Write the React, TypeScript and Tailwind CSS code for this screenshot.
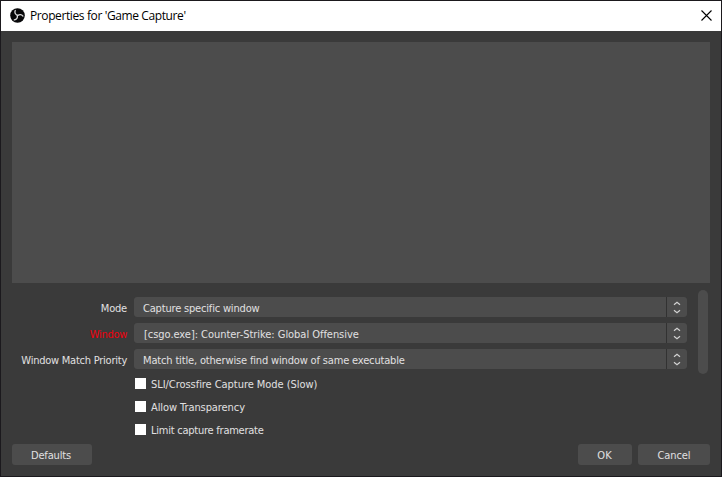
import React from 'react';

function ObsLogo() {
  return (
    <svg className="ml-[9px] h-[15px] w-[15px] shrink-0 -translate-y-px" viewBox="0 0 30 30" fill="none">
      <circle cx="15" cy="15" r="14.6" fill="#08080a" />
      <g stroke="#dededf" strokeWidth="2.6" strokeLinecap="round">
        <path d="M15 14.5C11 13.5 8.5 9.5 10.5 5" />
        <path d="M15 14.5C11 13.5 8.5 9.5 10.5 5" transform="rotate(120 15 15)" />
        <path d="M15 14.5C11 13.5 8.5 9.5 10.5 5" transform="rotate(240 15 15)" />
      </g>
    </svg>
  );
}

function SelectRow({ label, value, labelClass, valueClass }: { label: string; value: string; labelClass: string; valueClass: string }) {
  return (
    <div className="flex h-5 items-center">
      <div className={`w-[126px] shrink-0 pt-[3px] text-right whitespace-nowrap ${labelClass}`}>{label}</div>
      <div className="ml-[7px] flex h-5 w-[553px] gap-px overflow-hidden rounded-[3px] bg-[#323232]">
        <div className={`flex w-[532px] items-center bg-[#4c4c4c] pt-[3px] whitespace-nowrap ${valueClass}`}>
          <span>{value}</span>
        </div>
        <div className="flex w-5 items-center justify-center bg-[#4c4c4c]">
          <svg width="8" height="14" viewBox="0 0 8 14" fill="none" stroke="#d2d2d2" strokeWidth="1.2">
            <path d="M1 4.7L4 2.2L7 4.7M1 10.3L4 12.8L7 10.3" />
          </svg>
        </div>
      </div>
    </div>
  );
}

function Check({ label, className }: { label: string; className: string }) {
  return (
    <label className="flex h-[11px] items-center">
      <span className="h-[11px] w-[11px] bg-white" />
      <span className={`ml-[5px] pt-[3px] whitespace-nowrap ${className}`}>{label}</span>
    </label>
  );
}

export default function App() {
  return (
    <div className="flex h-[477px] w-[722px] flex-col border border-[#1b191d] bg-[#3a3a3a] font-['DejaVu_Sans_Condensed','DejaVu_Sans',sans-serif] text-[11px] leading-[14px] text-[#e1e0e1]">
      <div className="flex h-[30px] shrink-0 items-center bg-white text-black">
        <ObsLogo />
        <span className="ml-[5px] font-['Open_Sans',sans-serif] text-[12px] leading-4 tracking-[-0.39px]">Properties for 'Game Capture'</span>
        <svg className="mr-[9px] ml-auto -translate-y-px" width="11" height="11" viewBox="0 0 11 11" stroke="#000" strokeWidth="1.1">
          <path d="M.5 .5L10.5 10.5M10.5 .5L.5 10.5" />
        </svg>
      </div>
      <div className="mt-[11px] ml-[11px] h-[241px] w-[698px] shrink-0 bg-[#4c4c4c]" />
      <div className="mt-[7px] flex h-[154px] shrink-0">
        <div className="w-[686px] pt-[7px]">
          <div className="flex flex-col gap-1.5">
            <SelectRow label="Mode" value="Capture specific window" labelClass="tracking-[-0.2px]" valueClass="pl-[9px] tracking-[-0.18px]" />
            <SelectRow label="Window" value="[csgo.exe]: Counter-Strike: Global Offensive" labelClass="tracking-[-0.3px] text-[#f0000c]" valueClass="pl-[10px] tracking-[-0.04px]" />
            <SelectRow label="Window Match Priority" value="Match title, otherwise find window of same executable" labelClass="tracking-[-0.24px]" valueClass="pl-[9px] tracking-[-0.16px]" />
          </div>
          <div className="mt-[9px] ml-[134px] flex flex-col gap-3">
            <Check label="SLI/Crossfire Capture Mode (Slow)" className="tracking-[-0.05px]" />
            <Check label="Allow Transparency" className="tracking-[-0.08px]" />
            <Check label="Limit capture framerate" className="tracking-[-0.24px]" />
          </div>
        </div>
        <div className="ml-[11px] h-[84px] w-[10px] rounded-full bg-[#4c4c4c]" />
      </div>
      <div className="flex h-[21px] shrink-0 gap-1.5 px-[11px]">
        <button className="mr-auto w-[80px] rounded-[3px] bg-[#4c4c4c] pt-[2px] pr-[2px] tracking-[-0.15px]">Defaults</button>
        <button className="w-[54px] rounded-[3px] bg-[#4c4c4c] pt-[2px] pr-px">OK</button>
        <button className="w-[72px] rounded-[3px] bg-[#4c4c4c] pt-[2px] tracking-[-0.1px]">Cancel</button>
      </div>
    </div>
  );
}
